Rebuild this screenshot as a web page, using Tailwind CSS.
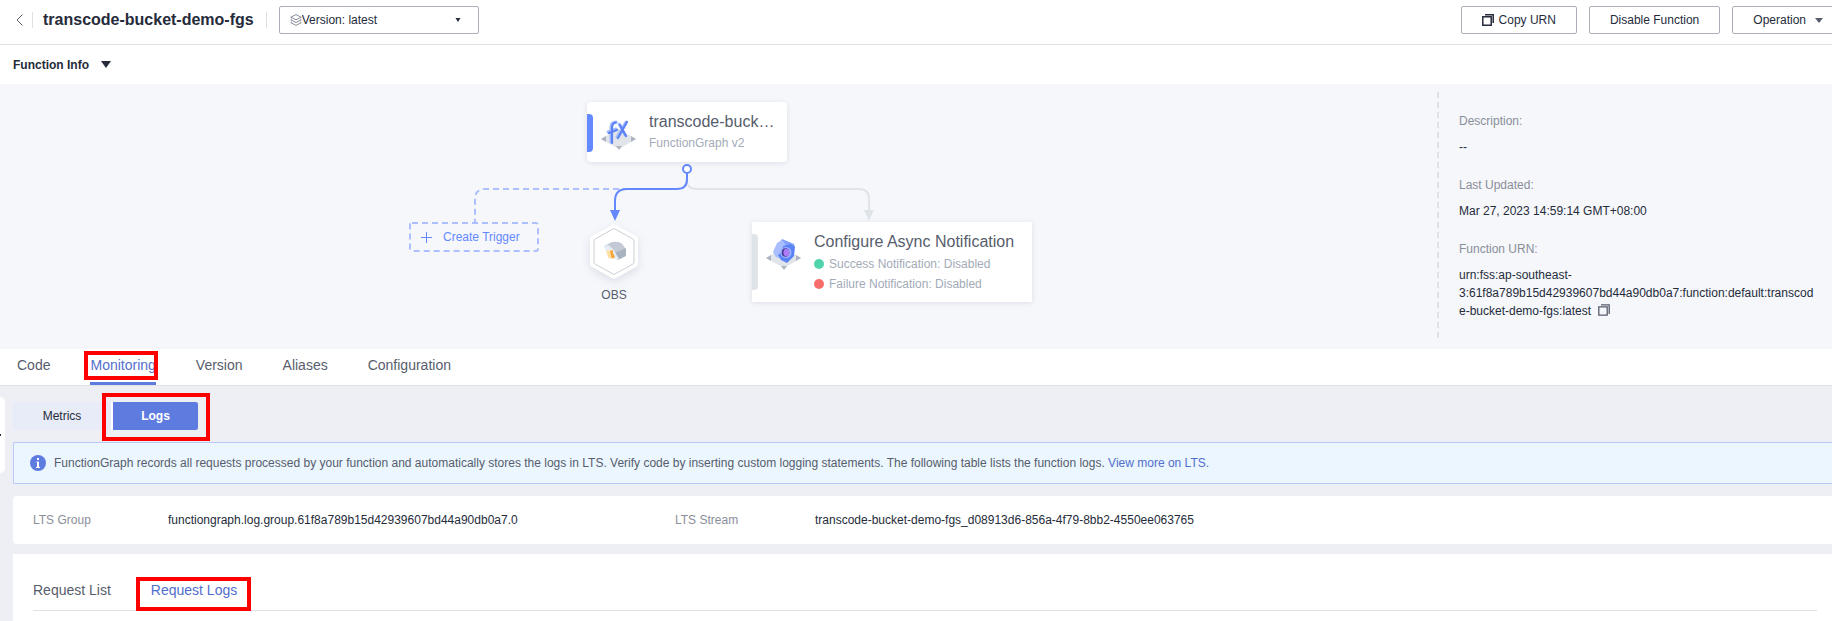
<!DOCTYPE html>
<html lang="en">
<head>
<meta charset="utf-8">
<title>FunctionGraph - transcode-bucket-demo-fgs</title>
<script src="https://cdn.jsdelivr.net/npm/@tailwindcss/browser@4"></script>
</head>
<body class="min-h-screen flex flex-col overflow-x-hidden bg-[#eeeff5] font-['Liberation_Sans',Arial,sans-serif] text-xs text-[#252b3a]">

<header class="flex h-[45px] items-center overflow-hidden border-b border-[#dfe1e6] bg-white pb-1 pl-4">
  <button aria-label="Back" class="flex h-4 w-[7px] items-center">
    <svg width="7" height="12" viewBox="0 0 7 12" fill="none" stroke="#575d6c"><path d="M6.500 .5 1 6l5.500 5.500"/></svg>
  </button>
  <span class="ml-[9px] h-4 w-px bg-[#dfe1e6]"></span>
  <h1 class="ml-2.5 whitespace-nowrap text-base font-bold leading-5">transcode-bucket-demo-fgs</h1>
  <span class="ml-3 h-4 w-px bg-[#dfe1e6]"></span>
  <div class="relative ml-3 h-7 w-[200px] shrink-0">
    <svg class="pointer-events-none absolute left-[11px] top-2" width="12" height="12" viewBox="0 0 12 12" fill="none" stroke="#6b7180" stroke-width=".8" stroke-linejoin="round"><path d="M6 .6 11.200 3.200 6 5.800 .8 3.200ZM1.800 5 .8 5.900 6 8.500l5.200-2.600-1-.9M1.800 7.800l-1 .9L6 11.400l5.200-2.700-1-.9"/></svg>
    <select aria-label="Version" class="h-7 w-full appearance-none rounded-xs border border-[#adb0b8] bg-transparent pl-[22px] pr-6 text-xs">
      <option>Version: latest</option>
    </select>
    <svg class="pointer-events-none absolute right-[18px] top-3" width="6" height="4" fill="#252b3a"><path d="M.5 0h5L3 4Z"/></svg>
  </div>
  <div class="-mr-3 ml-auto flex shrink-0 gap-3">
    <button class="flex h-7 items-center gap-[5px] rounded-xs border border-[#adb0b8] px-5">
      <svg width="12" height="12" viewBox="0 0 12 12" fill="none" stroke="#252b3a" stroke-width="1.500"><path d="M.8 2.800h8.400v8.400H.8ZM3 .8h8.200V9"/></svg>
      Copy URN
    </button>
    <button class="h-7 rounded-xs border border-[#adb0b8] px-5">Disable Function</button>
    <button class="flex h-7 items-center gap-[9px] rounded-xs border border-[#adb0b8] px-5">Operation
      <svg width="8" height="5" fill="#575d6c"><path d="M0 0h8L4 5Z"/></svg>
    </button>
  </div>
</header>

<button class="flex h-[39px] items-center gap-3 bg-white pl-[13px] font-bold">Function Info
  <svg width="10" height="7" fill="#252b3a"><path d="M0 0h10L5 7Z"/></svg>
</button>

<section class="flex h-[265px] bg-[#f5f7fb]">
  <div class="flex min-w-0 flex-1 justify-center">
    <!-- Trigger graph: a free canvas, nodes are pinned to it -->
    <div class="relative h-full w-[621px] shrink-0">
      <svg class="absolute left-0 top-0" width="621" height="265" fill="none" stroke-width="2">
        <path d="M279 89v8q0 8 10 8h162q10 0 10 10v14" stroke="#dfe4e9"/>
        <path d="M456 126h10l-5 11Z" fill="#dfe4e9"/>
        <path d="M221 105H77q-10 0-10 10v23" stroke="#adbfff" stroke-dasharray="6 4"/>
        <path d="M279 89v6q0 10-10 10h-50q-12 0-12 12v12" stroke="#6489ff"/>
        <path d="M202 126h10l-5 11Z" fill="#6489ff"/>
        <circle cx="279" cy="85" r="4" fill="#fff" stroke="#6489ff"/>
        <rect x="2" y="139" width="128" height="28" rx="2" stroke="#adbfff" stroke-dasharray="6 4"/>
      </svg>

      <article class="absolute left-[179px] top-[18px] flex h-[60px] w-[200px] items-start rounded-sm bg-white shadow-[0_1px_5px_rgba(40,50,80,0.12)]">
        <span class="mt-3 h-[38px] w-1.5 rounded-r-sm bg-[#6489ff]"></span>
        <svg class="ml-[7px] mt-3 shrink-0" width="37" height="38" viewBox="0 0 37 38">
          <path d="M1 25 18 15l18 10-17 10Z" fill="#e1e5ea"/>
          <path d="m1 25 5-3v6ZM36 25l-5-3v6ZM16 32h6l-3 4Z" fill="#aeb5c0"/>
          <g fill="none" stroke-linecap="round" stroke-linejoin="round">
            <path d="M11 28V13q0-5 5-5M8 18l8-3M19 10l6 11M26 8l-9 15" stroke="#a7bcff" stroke-width="3"/>
            <path d="M12 29V14q0-5 4-5.500M9 19l8-3M20 11l6 11M27 8l-9 16" stroke="#5b83f5" stroke-width="2.200"/>
          </g>
        </svg>
        <div class="ml-3 min-w-0 flex-1 pr-3 pt-2.5">
          <h2 class="truncate text-base leading-5 text-[#575d6c]">transcode-bucket-demo-fgs</h2>
          <p class="mt-[3px] leading-4 text-[#a3aab8]">FunctionGraph v2</p>
        </div>
      </article>

      <button class="absolute left-px top-[138px] flex h-[30px] w-[130px] items-center gap-[11px] pl-3 text-[#6489ff]">
        <svg width="11" height="12" fill="none" stroke="#6489ff"><path d="M0 6.500h11M5.500 1v11"/></svg>
        Create Trigger
      </button>

      <div class="absolute left-[176px] top-[136px] flex w-[60px] flex-col items-center">
        <svg width="60" height="64" viewBox="0 0 60 64" class="drop-shadow-[0_3px_4px_rgba(40,50,80,0.12)]">
          <path d="M28 5q2-1 4 0l20 11q2 1 2 3v25q0 2-2 3L32 58q-2 1-4 0L8 47q-2-1-2-3V19q0-2 2-3Z" fill="#fff"/>
          <path d="M29 9q1-.5 2 0l18 10q1 .5 1 2v21q0 1.500-1 2L31 54q-1 .5-2 0L11 44q-1-.5-1-2V21q0-1.500 1-2Z" fill="none" stroke="#cdcfd6"/>
          <path d="m20 26 8-4q5-1 9 1 4 3 5 9l-9 3Z" fill="#c3cad5"/>
          <path d="m31 33 11-5v8l-8 4-5-3Z" fill="#a9b2c0"/>
          <path d="m20 26 4-1 5 4 3 5 3 5-2 1-9-4Z" fill="#e8ecf3"/>
          <path d="m22 31 6-1 2 7-5 2Z" fill="#ffe0a0"/><path d="m26 31 3-1v3l2 4-3 2-1-3Z" fill="#f2a83f"/>
        </svg>
        <span class="mt-[3px] leading-4 text-[#575d6c]">OBS</span>
      </div>

      <article class="absolute left-[344px] top-[138px] flex h-20 w-[280px] items-start bg-white shadow-[0_1px_5px_rgba(40,50,80,0.12)]">
        <span class="mt-3 h-14 w-1.5 rounded-r-sm bg-[#dfe4e9]"></span>
        <svg class="ml-[7px] mt-3 shrink-0" width="37" height="38" viewBox="0 0 37 38">
          <path d="M1 24 18 14l18 10-17 10Z" fill="#e1e5ea"/>
          <path d="m1 24 5-3v6ZM36 24l-5-3v6ZM16 32h6l-3 4Z" fill="#aeb5c0"/>
          <path d="m14 9 3-4 12 5 1 3-9-1Z" fill="#84a0ff"/>
          <path d="m8 18 4-9 5-3 4 5-4 14-6-2Z" fill="#a9beff"/>
          <path d="m18 12 8-2 4 3-1 9-7 7-6-3-3-5 4-3Z" fill="#5b83f5"/>
          <circle cx="21" cy="18.500" r="5.500" fill="#9cb2ff"/>
          <ellipse cx="20.500" cy="18.500" rx="3.800" ry="4.300" fill="#4a3b9b"/>
          <ellipse cx="21.500" cy="18.500" rx="3" ry="3.800" fill="#ab7cf5"/>
        </svg>
        <div class="ml-3 whitespace-nowrap pt-2.5">
          <h2 class="text-base leading-5 text-[#575d6c]">Configure Async Notification</h2>
          <p class="mt-0.5 flex items-center gap-[5px] leading-5 text-[#a3aab8]"><span class="size-2.5 rounded-full bg-[#50d4ab]"></span>Success Notification: Disabled</p>
          <p class="flex items-center gap-[5px] leading-5 text-[#a3aab8]"><span class="size-2.5 rounded-full bg-[#f66f6a]"></span>Failure Notification: Disabled</p>
        </div>
      </article>
    </div>
  </div>

  <aside class="flex w-[395px] shrink-0 gap-5 py-2">
    <span class="w-0.5 bg-[repeating-linear-gradient(to_bottom,#dfe1e6_0_6px,transparent_6px_10px)]"></span>
    <dl class="w-[360px] pt-5 leading-[18px] text-[#252b3a]">
      <dt class="text-[#8a8e99]">Description:</dt>
      <dd class="mb-5 mt-2">--</dd>
      <dt class="text-[#8a8e99]">Last Updated:</dt>
      <dd class="mb-5 mt-2">Mar 27, 2023 14:59:14 GMT+08:00</dd>
      <dt class="text-[#8a8e99]">Function URN:</dt>
      <dd class="mt-2">urn:fss:ap-southeast-<br>3:61f8a789b15d42939607bd44a90db0a7:function:default:transcod<br>e-bucket-demo-fgs:latest
        <button aria-label="Copy function URN" class="ml-1 align-[-1px]"><svg width="12" height="12" viewBox="0 0 12 12" fill="none" stroke="#575d6c" stroke-width="1.300"><path d="M.8 2.800h8.400v8.400H.8ZM3 .8h8.200V10"/></svg></button>
      </dd>
    </dl>
  </aside>
</section>

<nav class="flex h-[37px] gap-10 border-b border-[#dfe1e6] bg-white pl-[17px] text-sm leading-[33px] text-[#575d6c]">
  <a href="#code">Code</a>
  <a href="#monitoring" class="relative border-b-3 border-[#5e7ce0] text-[#526ecc]">Monitoring
    <span class="absolute -left-1.5 -right-0.5 top-0.5 h-[29px] border-4 border-[#ff0000]"></span>
  </a>
  <a href="#version">Version</a>
  <a href="#aliases">Aliases</a>
  <a href="#configuration">Configuration</a>
</nav>

<main class="relative flex flex-1 flex-col pl-[13px] pt-4">
  <button aria-label="Expand panel" class="absolute left-0 top-[11px] flex h-[76px] w-[5px] items-center rounded-r-md bg-white"><span class="h-0.5 w-px bg-[#252b3a]"></span></button>

  <div class="flex h-7">
    <button class="w-[98px] rounded-l-xs bg-[#e8ecf8]">Metrics</button>
    <button class="relative ml-0.5 w-[85px] rounded-r-xs bg-[#5e7ce0] font-bold text-white">Logs
      <span class="absolute -left-0.5 top-0 h-7 w-0.5 bg-white"></span>
      <span class="absolute -bottom-[11px] -left-[11px] -right-3 -top-[9px] border-4 border-[#ff0000]"></span>
    </button>
  </div>

  <div class="mt-3 flex h-[42px] items-center gap-2 rounded-l-xs border border-r-0 border-[#b9c8f5] bg-[#ebf6ff] pl-4 text-[#575d6c]">
    <svg class="shrink-0" width="16" height="16" viewBox="0 0 16 16"><circle cx="8" cy="8" r="8" fill="#5e7ce0"/><path d="M7 3h2v2H7ZM6.500 6.500H9V12h1v1H6v-1h1V7.500h-.5Z" fill="#fff"/></svg>
    <p>FunctionGraph records all requests processed by your function and automatically stores the logs in LTS. Verify code by inserting custom logging statements. The following table lists the function logs. <a href="#lts" class="text-[#526ecc]">View more on LTS.</a></p>
  </div>

  <dl class="mt-3 flex h-12 items-center rounded-l-sm bg-white pl-5">
    <dt class="w-[135px] text-[#8a8e99]">LTS Group</dt>
    <dd class="w-[507px]">functiongraph.log.group.61f8a789b15d42939607bd44a90db0a7.0</dd>
    <dt class="w-[140px] text-[#8a8e99]">LTS Stream</dt>
    <dd>transcode-bucket-demo-fgs_d08913d6-856a-4f79-8bb2-4550ee063765</dd>
  </dl>

  <section class="mt-2.5 min-h-[67px] flex-1 bg-white pl-5 pr-[15px] pt-4">
    <nav class="flex h-[41px] gap-10 border-b border-[#dfe1e6] text-sm leading-10 text-[#575d6c]">
      <a href="#request-list">Request List</a>
      <a href="#request-logs" class="relative text-[#526ecc]">Request Logs
        <span class="absolute -left-[15px] -right-3.5 top-[7px] h-[34px] border-4 border-[#ff0000]"></span>
      </a>
    </nav>
  </section>
</main>
</body>
</html>
